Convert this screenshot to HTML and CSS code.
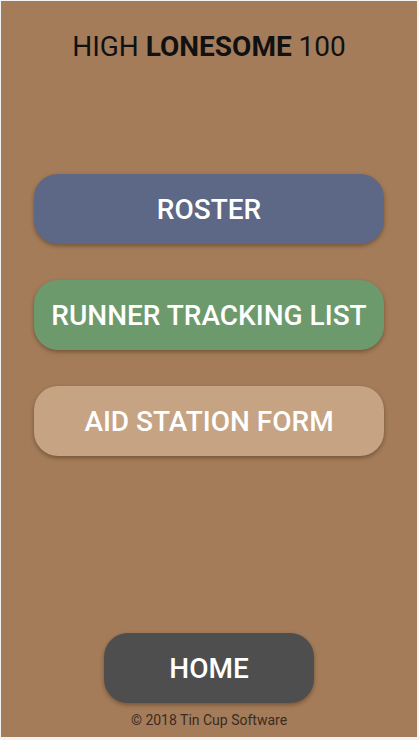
FILE: index.html
```html
<!DOCTYPE html>
<html>
<head>
<meta charset="utf-8">
<link rel="stylesheet" href="styles.css">
</head>
<body>
<div class="screen">
  <h1 class="title">HIGH <b>LONESOME</b> 100</h1>
  <nav class="menu">
    <button class="btn btn-roster">ROSTER</button>
    <button class="btn btn-tracking">RUNNER TRACKING LIST</button>
    <button class="btn btn-aid">AID STATION FORM</button>
  </nav>
  <footer class="footer">
    <button class="btn btn-home">HOME</button>
    <p class="copy">© 2018 Tin Cup Software</p>
  </footer>
</div>
</body>
</html>
```
FILE: styles.css
```css
html, body {
  margin: 0;
  padding: 0;
  background: #f2f2f2;
}
.screen {
  box-sizing: border-box;
  width: 416px;
  height: 736px;
  margin: 1px 2px 3px 1px;
  background: #a47c5a;
  display: flex;
  flex-direction: column;
  align-items: center;
  font-family: Roboto, "Liberation Sans", sans-serif;
  padding-top: 30px;
}
.title {
  margin: 0;
  font-size: 28px;
  line-height: 32px;
  font-weight: 400;
  color: #111;
}
.title b { font-weight: 700; }
.menu {
  margin-top: 111px;
  display: flex;
  flex-direction: column;
  gap: 36px;
  width: 350px;
}
.btn {
  border: none;
  height: 70px;
  border-radius: 24px;
  color: #fff;
  font-family: Roboto, "Liberation Sans", sans-serif;
  font-weight: 500;
  font-size: 28px;
  box-shadow: 0 2px 4px rgba(60, 35, 15, 0.45);
  padding: 0;
}
.btn-roster { background: #5c6886; }
.btn-tracking { background: #6d9a6d; }
.btn-aid { background: #c6a382; }
.footer {
  margin-top: auto;
  display: flex;
  flex-direction: column;
  align-items: center;
  padding-bottom: 8px;
}
.btn-home {
  width: 210px;
  background: #4e4e4e;
}
.copy {
  margin: 9px 0 0;
  font-size: 14px;
  line-height: 17px;
  color: #3b2b1f;
}
```
